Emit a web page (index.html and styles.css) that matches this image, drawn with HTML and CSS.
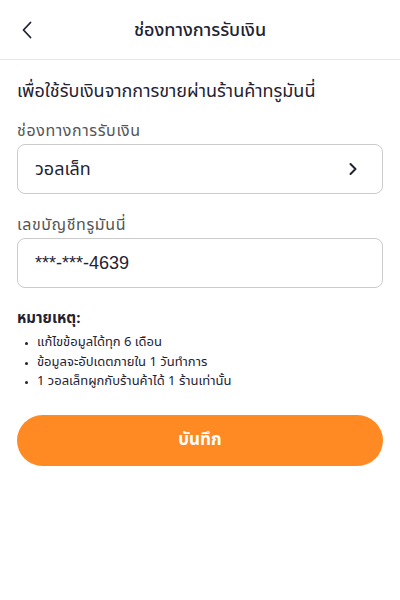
FILE: index.html
```html
<!DOCTYPE html>
<html lang="th">
<head>
<meta charset="utf-8">
<link rel="stylesheet" href="styles.css">
</head>
<body>
<div class="page">
  <header class="header">
    <span class="back">
      <svg width="12" height="18" viewBox="0 0 12 18"><path d="M9.5 1.5 L2.5 9 L9.5 16.5" fill="none" stroke="#1f2233" stroke-width="1.8" stroke-linecap="round" stroke-linejoin="round"/></svg>
    </span>
    <h1 class="title">ช่องทางการรับเงิน</h1>
  </header>
  <main class="content">
    <p class="lead">เพื่อใช้รับเงินจากการขายผ่านร้านค้าทรูมันนี่</p>
    <div class="field">
      <div class="label">ช่องทางการรับเงิน</div>
      <div class="box">
        <span class="value">วอลเล็ท</span>
        <svg class="chev" width="10" height="14" viewBox="0 0 10 14"><path d="M2.5 2 L7.5 7 L2.5 12" fill="none" stroke="#1f2233" stroke-width="2" stroke-linecap="round" stroke-linejoin="round"/></svg>
      </div>
    </div>
    <div class="field">
      <div class="label">เลขบัญชีทรูมันนี่</div>
      <div class="box">
        <span class="value num">***-***-4639</span>
      </div>
    </div>
    <div class="note">
      <div class="note-title">หมายเหตุ:</div>
      <ul class="note-list">
        <li>แก้ไขข้อมูลได้ทุก 6 เดือน</li>
        <li>ข้อมูลจะอัปเดตภายใน 1 วันทำการ</li>
        <li>1 วอลเล็ทผูกกับร้านค้าได้ 1 ร้านเท่านั้น</li>
      </ul>
    </div>
    <button class="save">บันทึก</button>
  </main>
</div>
</body>
</html>
```
FILE: styles.css
```css
* { box-sizing: border-box; }
html, body { margin: 0; padding: 0; background: #fff; }
body {
  font-family: "Noto Sans Thai", "Noto Sans Thai UI", "Noto Sans", "Liberation Sans", sans-serif;
  color: #1f2233;
}
.page { width: 400px; }
.header {
  position: relative;
  height: 60px;
  border-bottom: 1.5px solid #e8e8e8;
  display: flex;
  align-items: center;
  justify-content: center;
}
.back {
  position: absolute;
  left: 21px;
  top: 21px;
  display: flex;
}
.title {
  margin: 0;
  font-size: 18px;
  font-weight: 500;
  line-height: 1;
  padding-top: 2px;
}
.content {
  padding: 18px 17px 0 17px;
  display: flex;
  flex-direction: column;
}
.lead {
  margin: 0;
  font-size: 18px;
  line-height: 28px;
}
.field { margin-top: 13px; }
.field + .field { margin-top: 19px; }
.label {
  font-size: 16px;
  letter-spacing: 0.6px;
  color: #555;
  line-height: 24px;
}
.box {
  margin-top: 1px;
  height: 50px;
  border: 1px solid #cbcbcb;
  border-radius: 8px;
  display: flex;
  align-items: center;
  justify-content: space-between;
  padding: 0 24px 0 17px;
}
.value { font-size: 18px; }
.num { font-family: "Liberation Sans", sans-serif; font-size: 18px; }
.note { margin-top: 20px; }
.note-title {
  font-size: 15px;
  font-weight: 700;
  line-height: 22px;
}
.note-list {
  list-style: none;
  margin: 3px 0 0 0;
  padding: 0 0 0 20px;
  font-size: 13px;
  line-height: 19.5px;
}
.note-list li { position: relative; }
.note-list li::before {
  content: "";
  position: absolute;
  left: -12px;
  top: 9px;
  width: 3px;
  height: 3px;
  border-radius: 50%;
  background: #1f2233;
}
.save {
  margin-top: 23px;
  height: 51px;
  border: none;
  border-radius: 26px;
  background: #ff8a23;
  color: #fff;
  font-family: inherit;
  font-size: 17px;
  font-weight: 700;
  width: 100%;
}
```
